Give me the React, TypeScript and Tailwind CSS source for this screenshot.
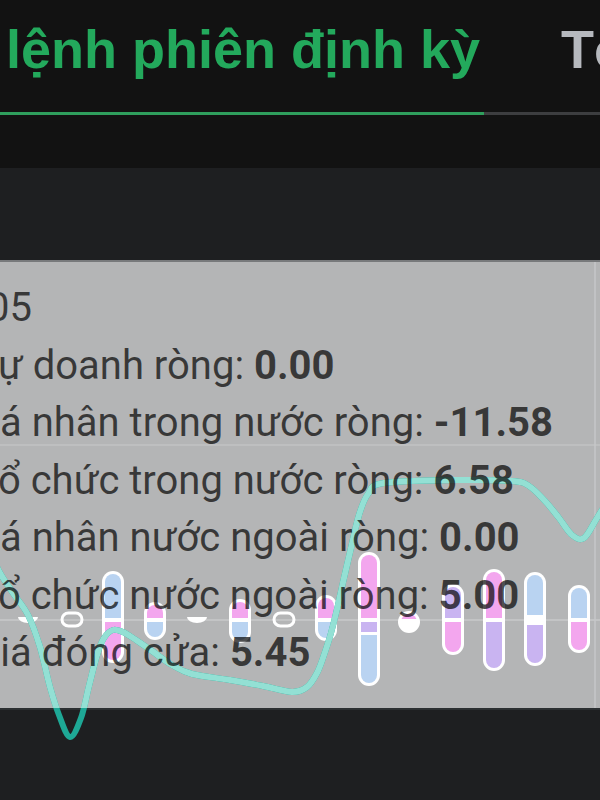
import React from 'react';

type Pt = [number, number];

interface Segment {
  from: number;
  to: number;
  color: string;
}

interface Bar {
  x: number;
  segments: Segment[];
}

const PINK = '#f3a6ee';
const BLUE = '#b9d3f1';
const LAV = '#c9b4f1';

const ZERO_Y = 620;

const BARS: Bar[] = [
  { x: 113, segments: [{ from: 574, to: 618, color: BLUE }, { from: 622, to: 660, color: PINK }] },
  { x: 155, segments: [{ from: 605, to: 618, color: PINK }, { from: 622, to: 637, color: BLUE }] },
  { x: 240, segments: [{ from: 602, to: 618, color: PINK }, { from: 622, to: 640, color: BLUE }] },
  { x: 326, segments: [{ from: 598, to: 618, color: PINK }, { from: 622, to: 638, color: BLUE }] },
  {
    x: 369,
    segments: [
      { from: 555, to: 618, color: PINK },
      { from: 622, to: 632, color: LAV },
      { from: 635, to: 683, color: BLUE },
    ],
  },
  { x: 409, segments: [{ from: 614, to: 619, color: PINK }, { from: 622, to: 630, color: '#ffffff' }] },
  { x: 453, segments: [{ from: 587, to: 618, color: LAV }, { from: 622, to: 652, color: PINK }] },
  { x: 494, segments: [{ from: 572, to: 618, color: PINK }, { from: 622, to: 668, color: LAV }] },
  { x: 535, segments: [{ from: 575, to: 615, color: BLUE }, { from: 625, to: 663, color: LAV }] },
  { x: 579, segments: [{ from: 588, to: 618, color: BLUE }, { from: 622, to: 650, color: PINK }] },
];

// tiny near-zero bars
const DOTS = [28, 197];
const EYES = [72, 284];

const LINE_POINTS: Pt[] = [
  [-8, 555], [0, 573], [13, 593], [28, 615], [40, 647], [50, 687], [59, 715], [70, 737],
  [81, 718], [89, 686], [97, 655], [104, 638], [113, 630], [123, 632], [136, 640],
  [152, 651], [172, 665], [192, 674], [230, 680], [263, 686], [292, 692], [307, 687],
  [317, 673], [324, 655], [331, 633], [338, 605], [344, 578], [351, 548], [359, 515],
  [368, 494], [384, 483], [460, 480], [512, 481], [529, 486], [545, 501], [559, 518],
  [572, 535], [584, 538], [597, 518], [608, 500],
];

function smoothPath(pts: Pt[]): string {
  let d = `M${pts[0][0]} ${pts[0][1]}`;
  for (let i = 0; i < pts.length - 1; i++) {
    const p0 = pts[i - 1] || pts[i];
    const p1 = pts[i];
    const p2 = pts[i + 1];
    const p3 = pts[i + 2] || p2;
    const c1x = p1[0] + (p2[0] - p0[0]) / 6;
    const c1y = p1[1] + (p2[1] - p0[1]) / 6;
    const c2x = p2[0] - (p3[0] - p1[0]) / 6;
    const c2y = p2[1] - (p3[1] - p1[1]) / 6;
    d += ` C${c1x.toFixed(1)} ${c1y.toFixed(1)} ${c2x.toFixed(1)} ${c2y.toFixed(1)} ${p2[0]} ${p2[1]}`;
  }
  return d;
}

const LINE_D = smoothPath(LINE_POINTS);

const ROWS = [
  { label: 'Tự doanh ròng: ', value: '0.00', shift: '-ml-[24px]' },
  { label: 'Cá nhân trong nước ròng: ', value: '-11.58', shift: '-ml-[26px]' },
  { label: 'Tổ chức trong nước ròng: ', value: '6.58', shift: '-ml-[24px]' },
  { label: 'Cá nhân nước ngoài ròng: ', value: '0.00', shift: '-ml-[26px]' },
  { label: 'Tổ chức nước ngoài ròng: ', value: '5.00', shift: '-ml-[24px]' },
  { label: 'Giá đóng cửa: ', value: '5.45', shift: '-ml-[27px]' },
];

const Chart: React.FC = () => (
  <svg
    className="pointer-events-none absolute left-0 top-0"
    width={600}
    height={800}
    viewBox="0 0 600 800"
  >
    <defs>
      <clipPath id="tip">
        <rect x={0} y={262} width={600} height={446} />
      </clipPath>
      {BARS.map((b) => {
        const top = b.segments[0].from - 3;
        const bottom = b.segments[b.segments.length - 1].to + 3;
        return (
          <clipPath id={`bar-${b.x}`} key={b.x}>
            <rect x={b.x - 8} y={top + 3} width={16} height={bottom - top - 6} rx={8} />
          </clipPath>
        );
      })}
    </defs>

    {/* grid lines seen through the tooltip */}
    <line x1={0} y1={445} x2={600} y2={445} stroke="#bebfc0" strokeWidth={2} />
    <line x1={0} y1={ZERO_Y} x2={600} y2={ZERO_Y} stroke="#c3c4c5" strokeWidth={2} />
    <line x1={595} y1={262} x2={595} y2={708} stroke="#c6c7c8" strokeWidth={1.5} />

    {DOTS.map((x) => (
      <path key={x} d={`M${x - 10} 617 a10 6 0 0 0 20 0 z`} fill="#ffffff" />
    ))}
    {EYES.map((x) => (
      <rect key={x} x={x - 10} y={613} width={20} height={13} rx={6.5} fill="none" stroke="#ffffff" strokeWidth={3} />
    ))}

    {BARS.map((b) => {
      const top = b.segments[0].from - 3;
      const bottom = b.segments[b.segments.length - 1].to + 3;
      return (
        <g key={b.x}>
          <rect x={b.x - 11} y={top} width={22} height={bottom - top} rx={11} fill="#ffffff" />
          <g clipPath={`url(#bar-${b.x})`}>
            {b.segments.map((s, i) => (
              <rect key={i} x={b.x - 8} y={s.from} width={16} height={s.to - s.from} fill={s.color} />
            ))}
          </g>
        </g>
      );
    })}

    <path d={LINE_D} fill="none" stroke="#1ea896" strokeWidth={6} strokeLinecap="round" />
    <path d={LINE_D} fill="none" stroke="#93e0d4" strokeWidth={6} strokeLinecap="round" clipPath="url(#tip)" />
  </svg>
);

const App: React.FC = () => {
  return (
    <div className="relative flex h-[800px] w-[600px] flex-col overflow-hidden bg-[#121212]">
      {/* Tabs */}
      <div className="h-[168px] shrink-0">
        <div className="flex whitespace-nowrap pt-[22px] font-['Liberation_Sans',Arial,sans-serif] text-[54px] font-bold leading-none">
          <span className="-ml-[78px] text-[#23a95c]">Sổ lệnh phiên định kỳ</span>
          <span className="ml-[81px] text-[#b6b9be]">Tổng hợp</span>
        </div>
        <div className="mt-[36px] flex h-[3px]">
          <div className="w-[484px] bg-[#2f9f5d]" />
          <div className="flex-1 bg-[#3d3e40]" />
        </div>
      </div>

      {/* Chart panel */}
      <div className="flex-1 bg-[#1e1f21] pt-[92px]">
        <div className="h-[450px] border-y-2 border-t-[#77797b] border-b-[#2c3032] bg-[#b4b5b6]">
          <div className="relative z-10 whitespace-nowrap pt-[17px] font-['Roboto',sans-serif] text-[40px] leading-[57.5px] text-black/70">
            <div className="-ml-[13px]">05</div>
            {ROWS.map((row) => (
              <div key={row.label} className={row.shift}>
                {row.label}
                <span className="font-bold">{row.value}</span>
              </div>
            ))}
          </div>
        </div>
      </div>

      <Chart />
    </div>
  );
};

export default App;
